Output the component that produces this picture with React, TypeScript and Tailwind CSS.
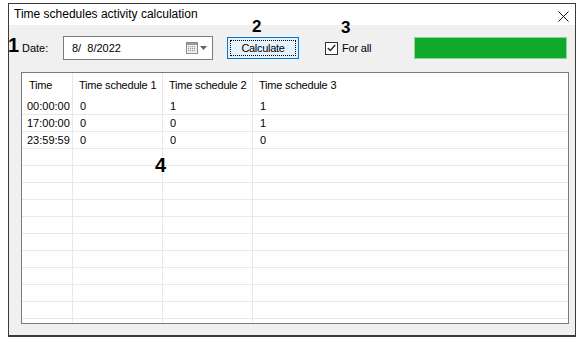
import React from "react";

const rows: string[][] = [
  ["00:00:00", "0", "1", "1"],
  ["17:00:00", "0", "0", "1"],
  ["23:59:59", "0", "0", "0"],
];

const TOTAL_ROWS = 13;

function CalendarIcon() {
  return (
    <svg width="12" height="12" viewBox="0 0 12 12">
      <rect x="0.5" y="0.5" width="11" height="11" fill="#f4f4f4" stroke="#8a8a8a" />
      <rect x="1" y="1" width="10" height="2" fill="#9a9a9a" />
      {[4, 6, 8].map((y) =>
        [2, 4, 6, 8].map((x) => (
          <rect key={`${x}-${y}`} x={x} y={y} width="1.2" height="1.2" fill="#9a9a9a" />
        ))
      )}
    </svg>
  );
}

export default function App() {
  const cellCls = [
    "w-[52px] pl-[5px]",
    "w-[90px] pl-[6px]",
    "w-[90px] pl-[6px]",
    "flex-1 pl-[6px]",
  ];
  const headCls = [
    "w-[52px] pl-[7px]",
    "w-[90px] pl-[5px]",
    "w-[90px] pl-[5px]",
    "flex-1 pl-[5px]",
  ];
  const headers = ["Time", "Time schedule 1", "Time schedule 2", "Time schedule 3"];
  const allRows = Array.from({ length: TOTAL_ROWS }, (_, i) => rows[i] ?? ["", "", "", ""]);

  return (
    <div
      className="w-[580px] h-[337px] bg-white overflow-hidden relative"
      style={{ fontFamily: '"Liberation Sans", Arial, sans-serif' }}
    >
      <div className="absolute left-[8px] top-[3px] w-[568px] h-[334px] border border-[#3a3a3a] border-b-2 flex flex-col bg-[#f0f0f0]">
        {/* Title bar */}
        <div className="h-[21px] bg-white flex items-center justify-between pl-[5px] pr-[6px] shrink-0">
          <span className="text-[12px] text-black leading-none -mt-[1px]">
            Time schedules activity calculation
          </span>
          <svg width="11" height="11" viewBox="0 0 11 11" className="mt-[4px]">
            <path d="M0.5 0.5 L10.5 10.5 M10.5 0.5 L0.5 10.5" stroke="#111" strokeWidth="1" />
          </svg>
        </div>

        {/* Controls row */}
        <div className="flex items-center h-[24px] mt-[11px] pl-[13px] pr-[8px] text-[11px] text-black">
          <span className="w-[41px]">Date:</span>
          <div className="w-[150px] h-[24px] border border-[#7a7a7a] bg-white flex items-center pl-[8px] pr-[5px]">
            <span className="flex-1 whitespace-pre">8/  8/2022</span>
            <CalendarIcon />
            <svg width="7" height="4" viewBox="0 0 7 4" className="ml-[2px]">
              <path d="M0 0 L7 0 L3.5 4 Z" fill="#606060" />
            </svg>
          </div>
          <div className="ml-[14px] w-[72px] h-[22px] border border-[#0078d7] bg-[#e5f1fb] p-[2px]">
            <div className="w-full h-full border border-dotted border-black flex items-center justify-center">
              <span className="tracking-[-0.3px]">Calculate</span>
            </div>
          </div>
          <div className="ml-[26px] flex items-center">
            <div className="w-[13px] h-[13px] border border-[#333] bg-white flex items-center justify-center">
              <svg width="9" height="8" viewBox="0 0 9 8">
                <path d="M0.8 4 L3.3 6.5 L8.2 1" stroke="#222" strokeWidth="1.3" fill="none" />
              </svg>
            </div>
            <span className="ml-[4px] tracking-[-0.2px]">For all</span>
          </div>
          <div className="ml-auto w-[153px] h-[22px] border border-[#8fd49c] bg-[#0fa92b]" />
        </div>

        {/* List view */}
        <div className="ml-[12px] mt-[12px] w-[548px] h-[252px] border border-[#7b7b7b] bg-white relative overflow-hidden text-[11px] text-black">
          {/* column grid lines */}
          <div className="absolute inset-0 flex pointer-events-none">
            <div className="w-[51px] border-r border-[#e8e8e8]" />
            <div className="w-[90px] border-r border-[#e8e8e8]" />
            <div className="w-[90px] border-r border-[#e8e8e8]" />
          </div>
          <div className="relative flex flex-col">
            <div className="h-[25px] flex items-center tracking-[-0.2px]">
              {headers.map((h, i) => (
                <div key={i} className={`${headCls[i]} shrink-0 whitespace-nowrap`}>
                  {h}
                </div>
              ))}
            </div>
            {allRows.map((r, ri) => (
              <div key={ri} className="h-[17px] flex items-center border-b border-[#e9e9e9]">
                {r.map((c, ci) => (
                  <div key={ci} className={`${cellCls[ci]} shrink-0 whitespace-nowrap`}>
                    {c}
                  </div>
                ))}
              </div>
            ))}
          </div>
        </div>
      </div>

      {/* Annotation numbers */}
      <span className="absolute left-[8px] top-[35px] text-[20px] font-bold leading-none text-black">1</span>
      <span className="absolute left-[252px] top-[18px] text-[17px] font-bold leading-none text-black">2</span>
      <span className="absolute left-[341px] top-[19px] text-[17px] font-bold leading-none text-black">3</span>
      <span className="absolute left-[155px] top-[155px] text-[20px] font-bold leading-none text-black">4</span>
    </div>
  );
}
